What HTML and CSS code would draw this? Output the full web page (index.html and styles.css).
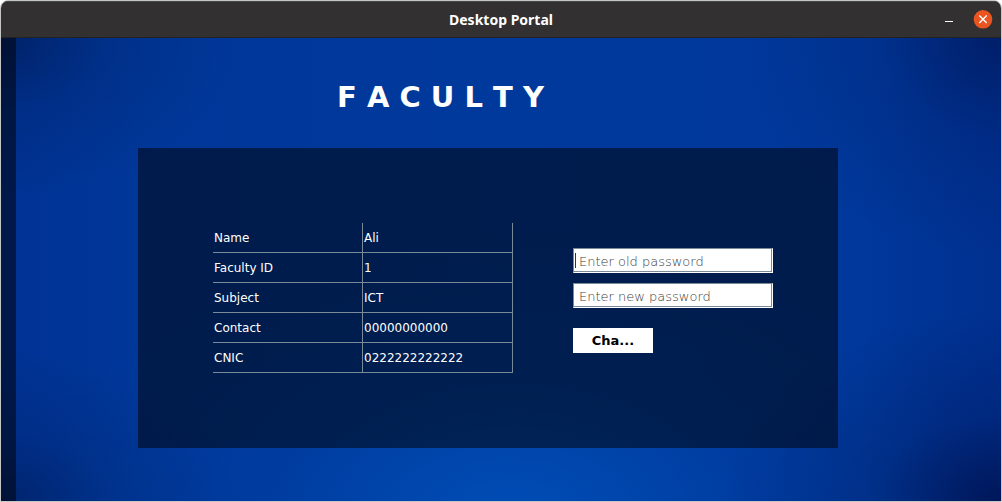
FILE: index.html
```html
<!DOCTYPE html>
<html lang="en">
<head>
<meta charset="utf-8">
<title>Desktop Portal</title>
<link rel="stylesheet" href="styles.css">
</head>
<body>
<div class="window">
  <header class="titlebar">
    <span class="titlebar-name">Desktop Portal</span>
    <div class="window-controls">
      <button class="control" type="button" aria-label="Minimize">
        <svg width="20" height="20" viewBox="0 0 20 20" aria-hidden="true"><path d="M6 11.5h8" stroke="#fff" stroke-width="1"/></svg>
      </button>
      <button class="control" type="button" aria-label="Close">
        <svg width="20" height="20" viewBox="0 0 20 20" aria-hidden="true"><circle cx="10" cy="9.3" r="9.3" fill="#e95420"/><path d="M6.3 5.6l7.4 7.4M13.7 5.6l-7.4 7.4" stroke="#fff" stroke-width="1.4"/></svg>
      </button>
    </div>
  </header>
  <div class="content">
    <aside class="side-strip"></aside>
    <main class="page">
      <h1 class="heading">F A C U L T Y</h1>
      <section class="panel">
        <table class="details">
          <tbody>
            <tr><th scope="row">Name</th><td>Ali</td></tr>
            <tr><th scope="row">Faculty ID</th><td>1</td></tr>
            <tr><th scope="row">Subject</th><td>ICT</td></tr>
            <tr><th scope="row">Contact</th><td>00000000000</td></tr>
            <tr><th scope="row">CNIC</th><td>0222222222222</td></tr>
          </tbody>
        </table>
        <form class="password-form">
          <input class="field field-active" type="password" placeholder="Enter old password" aria-label="Enter old password">
          <input class="field" type="password" placeholder="Enter new password" aria-label="Enter new password">
          <button class="submit" type="button">Cha...</button>
        </form>
      </section>
    </main>
  </div>
</div>
</body>
</html>
```
FILE: styles.css
```css
* {
  box-sizing: border-box;
}

body {
  margin: 0;
  background: #fff;
  font-family: "DejaVu Sans", sans-serif;
}

.window {
  display: flex;
  flex-direction: column;
  min-height: 100vh;
  border: 1px solid #c5c6c6;
  border-radius: 8px 8px 0 0;
  overflow: hidden;
}

.titlebar {
  display: grid;
  grid-template-columns: 1fr auto 1fr;
  align-items: center;
  height: 37px;
  padding: 0 8px;
  background: #323030;
  border-top: 1px solid #484848;
  border-bottom: 1px solid #222;
  color: #fff;
}

.titlebar-name {
  grid-column: 2;
  font: bold 14px/20px "Noto Sans", sans-serif;
}

.window-controls {
  display: flex;
  justify-content: flex-end;
  gap: 14px;
}

.control {
  width: 20px;
  height: 20px;
  padding: 0;
  border: 0;
  background: none;
}

.control svg {
  display: block;
}

.content {
  display: flex;
  flex: 1;
  background:
    radial-gradient(ellipse 240px 160px at 0 0, #001a50a0, #001a5034 45%, #001a5000),
    radial-gradient(ellipse 260px 220px at 100% 0, #001452a0, #00145230 45%, #00145200),
    radial-gradient(ellipse 240px 150px at 0 100%, #001a5090, #001a5030 45%, #001a5000),
    radial-gradient(ellipse 280px 190px at 100% 100%, #00104ac8, #00104a40 45%, #00104a00),
    radial-gradient(ellipse 480px 300px at 51% 104%, #004eb6, #0042a870 50%, #003c9e00),
    linear-gradient(90deg, #003294, #003799 14%, #00399c 50%, #00389b 86%, #003090);
}

.side-strip {
  flex: none;
  width: 15px;
  background: #00000080;
}

.page {
  flex: 1;
  padding: 42px 163px 53px 122px;
}

.heading {
  margin: 0 95px 33px 0;
  color: #fff;
  font-size: 29px;
  line-height: 35px;
  text-align: center;
}

.panel {
  display: flex;
  justify-content: space-between;
  gap: 60px;
  min-height: 300px;
  padding: 75px 65px 75px 75px;
  background: #00000080;
}

.details {
  flex: 3;
  border-collapse: separate;
  border-spacing: 0;
  color: #fff;
  font-size: 12px;
  line-height: 15px;
}

.details th,
.details td {
  width: 50%;
  height: 30px;
  padding: 1px 1px 0;
  border-right: 1px solid #7a8a99;
  border-bottom: 1px solid #7a8a99;
  font-weight: normal;
  text-align: left;
}

.password-form {
  display: flex;
  flex: 2;
  flex-direction: column;
  gap: 10px;
  padding-top: 25px;
}

.field {
  width: 100%;
  height: 25px;
  padding: 2px 5px 0;
  border: 1px solid #7a8a99;
  border-right-color: #fff;
  border-bottom-color: #fff;
  border-radius: 0;
  outline: 0;
  background: #fff;
  box-shadow: inset -1px -1px #7a8a99;
  color: #333;
  font-family: "DejaVu Sans", sans-serif;
  font-size: 13px;
  font-weight: 200;
}

.field::placeholder {
  color: #404040;
  opacity: 1;
}

.field-active {
  background: linear-gradient(#333, #333) 1px 4px / 1px 15px no-repeat #fff;
}

.submit {
  width: 80px;
  height: 25px;
  margin-top: 10px;
  padding: 0;
  border: 0;
  background: #fff;
  color: #000;
  font: bold 13px "DejaVu Sans", sans-serif;
}
```
